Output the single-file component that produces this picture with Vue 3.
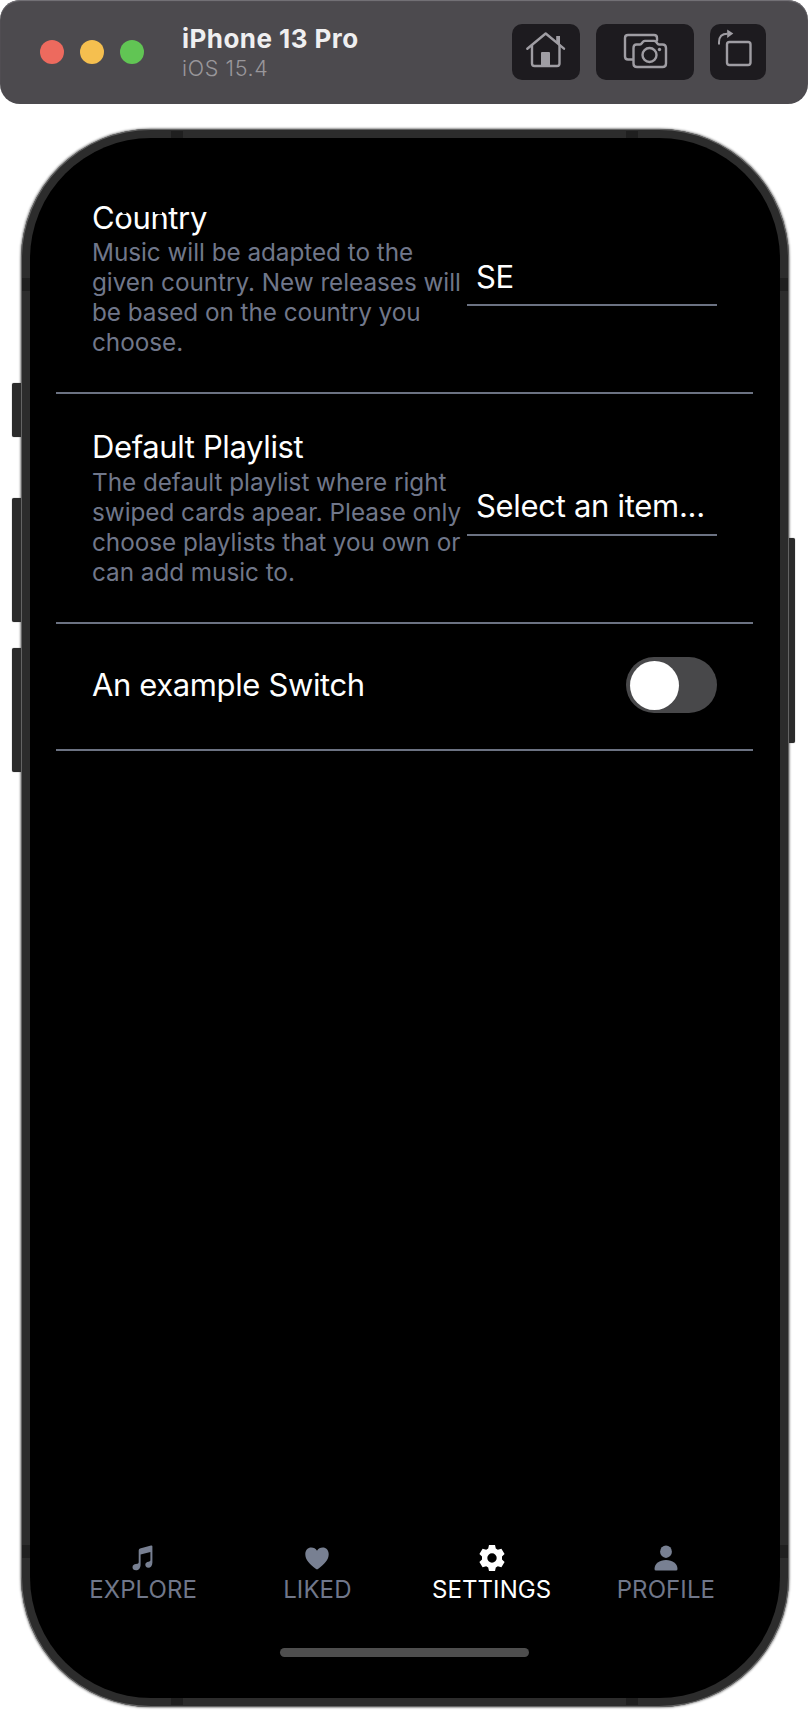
<script setup>
const rows = [
  {
    title: 'Country',
    lines: ['Music will be adapted to the', 'given country. New releases will', 'be based on the country you', 'choose.'],
    value: 'SE',
  },
  {
    title: 'Default Playlist',
    lines: ['The default playlist where right', 'swiped cards apear. Please only', 'choose playlists that you own or', 'can add music to.'],
    value: 'Select an item...',
  },
]
const tabs = [
  { id: 'explore', label: 'EXPLORE' },
  { id: 'liked', label: 'LIKED' },
  { id: 'settings', label: 'SETTINGS' },
  { id: 'profile', label: 'PROFILE' },
]
const bands = ['top a', 'top b', 'bottom a', 'bottom b', 'left c', 'left d', 'right c', 'right d']
</script>

<template>
  <div class="page">
    <header class="toolbar">
      <div class="lights"><i class="red"></i><i class="amber"></i><i class="green"></i></div>
      <div class="device">
        <div class="name">iPhone 13 Pro</div>
        <div class="os">iOS 15.4</div>
      </div>
      <div class="buttons">
        <button class="home">
          <svg width="68" height="56" fill="none" stroke="#9f9da3" stroke-width="2.4" stroke-linejoin="round" stroke-linecap="round">
            <path d="M15.300 24.700 33.700 9.500 52 24.700" />
            <path d="M20 21.500V39.500Q20 42 22.500 42H45Q47.500 42 47.500 39.500V21.500" />
            <path d="M44.200 12H48V21L44.200 17.500Z" fill="#9f9da3" stroke="none" />
            <path d="M29 42V29Q29 28 30 28H37Q38 28 38 29V42Z" fill="#9f9da3" stroke="none" />
          </svg>
        </button>
        <button class="shot">
          <svg width="98" height="56" fill="none" stroke="#9f9da3" stroke-width="2.4" stroke-linejoin="round" stroke-linecap="round">
            <path d="M36.500 35.500H32Q29 35.500 29 32.500V14Q29 11 32 11H58Q61 11 61 14V16.500" />
            <path d="M40.500 20.500H44Q45 20.500 46 19L47 17.700Q47.700 16.900 49 16.900H58Q59.300 16.900 60 17.700L61 19Q62 20.500 63 20.500H66.500Q70 20.500 70 24V39.500Q70 43 66.500 43H41Q37.500 43 37.500 39.500V24Q37.500 20.500 40.500 20.500Z" />
            <circle cx="53.500" cy="31" r="7" />
            <circle cx="63.500" cy="25.500" r="1.700" fill="#9f9da3" stroke="none" />
          </svg>
        </button>
        <button class="rotate">
          <svg width="56" height="56" fill="none" stroke="#9f9da3" stroke-width="2.4" stroke-linejoin="round">
            <rect x="17" y="18" width="23.500" height="23" rx="2.500" />
            <path d="M9 20.500V18Q9 9.700 17.500 9.700" stroke-width="2" />
            <path d="M17.200 5.500 23.300 9.500 17.200 14Z" fill="#9f9da3" stroke="none" />
          </svg>
        </button>
      </div>
    </header>

    <main class="phone">
      <i class="key mute"></i><i class="key up"></i><i class="key down"></i><i class="key power"></i>
      <i v-for="b in bands" :key="b" :class="['band', b]"></i>
      <div class="screen">
        <section v-for="row in rows" :key="row.title" class="row">
          <div class="copy">
            <h2>{{ row.title }}</h2>
            <p><span v-for="line in row.lines" :key="line">{{ line }}</span></p>
          </div>
          <div class="field">{{ row.value }}</div>
        </section>
        <section class="row slim">
          <h2 class="switch-label">An example Switch</h2>
          <div class="switch"><i></i></div>
        </section>
        <nav class="tabs">
          <div v-for="tab in tabs" :key="tab.id" :class="['tab', tab.id]">
            <svg v-if="tab.id === 'explore'" width="28" height="28" viewBox="0 0 28 28" fill="currentColor">
              <path d="M9.700 6.500Q9.700 5 11 4.500L22 1.600Q23.400 1.300 23.400 2.600V18.500C23.400 22 21.500 23.700 19.400 23.700C17.300 23.700 16.300 22.300 16.300 20.800C16.300 18.800 17.800 18 19.500 17.700C20.900 17.400 21.400 17 21.400 16V7.900L11.600 10.400V20.500C11.600 24.500 9.500 26.300 7 26.300C4.800 26.300 3.500 25 3.500 23.200C3.500 21.200 5 20.500 7 20.100C9.200 19.700 9.700 19.300 9.700 18Z" />
            </svg>
            <svg v-else-if="tab.id === 'liked'" width="28" height="28" viewBox="0 0 28 28" fill="currentColor">
              <path d="M14 25.200Q13.300 25.200 12.700 24.700C6.500 20 2.300 15.600 2.300 10.200C2.300 6.300 5 3.600 8.200 3.600C10.800 3.600 12.700 4.800 14 6.700C15.300 4.800 17.200 3.600 19.800 3.600C23 3.600 25.700 6.300 25.700 10.200C25.700 15.600 21.500 20 15.300 24.700Q14.700 25.200 14 25.200Z" />
            </svg>
            <svg v-else-if="tab.id === 'settings'" width="28" height="28" viewBox="0 0 28 28" fill="currentColor">
              <path fill-rule="evenodd" d="M11 1H17L17.800 4.600L19.800 5.800L23.400 4.700L26.600 10L24 12.600V15.400L26.600 18L23.400 23.300L19.800 22.200L17.800 23.400L17 27H11L10.200 23.400L8.200 22.200L4.600 23.300L1.400 18L4 15.400V12.600L1.400 10L4.600 4.700L8.200 5.800L10.200 4.600ZM14 9.300A4.700 4.700 0 1 0 14 18.700A4.700 4.700 0 1 0 14 9.300Z" />
            </svg>
            <svg v-else width="28" height="28" viewBox="0 0 28 28" fill="currentColor">
              <ellipse cx="14" cy="7.700" rx="5.900" ry="6.200" />
              <path d="M2.500 25C2.500 19.500 7.500 16 14 16S25.500 19.500 25.500 25Q25.500 26.500 24 26.500H4Q2.500 26.500 2.500 25Z" />
            </svg>
            <span>{{ tab.label }}</span>
          </div>
        </nav>
        <div class="indicator"></div>
      </div>
      <!-- black status bar remnants over the first heading -->
      <svg class="status" width="70" height="24" viewBox="0 0 70 24">
        <path d="M15 8H21.500V20H18L15 16Z" />
        <path d="M28 8H45V17H38L36 19L28 17Z" />
        <path d="M49.500 8H57V20H50Z" />
        <path d="M57 8H65L61 15H57Z" />
      </svg>
    </main>
  </div>
</template>

<style>
body { background: #fff; }
</style>

<style scoped>
.page { width: 808px; height: 1712px; overflow: hidden; font-family: Inter, "Liberation Sans", sans-serif; box-sizing: border-box; }
.page * { box-sizing: border-box; }
.toolbar { height: 104px; border-radius: 20px; background: #4c4a4e; box-shadow: inset 0 1px 1px #77757a; display: flex; align-items: center; padding: 0 42px 0 40px; }
.lights { display: flex; gap: 16px; }
.lights i { width: 24px; height: 24px; border-radius: 50%; }
.red { background: #ed6a5e; }
.amber { background: #f5bf4f; }
.green { background: #61c554; }
.device { margin-left: 38px; width: 330px; height: 56px; white-space: nowrap; }
.name { font-weight: 700; font-size: 26px; line-height: 30px; letter-spacing: 0.45px; color: #efeff0; }
.os { font-weight: 300; font-size: 21.500px; line-height: 26px; margin-top: 1px; letter-spacing: 0.65px; color: #99979b; }
.buttons { display: flex; gap: 16px; margin-left: auto; }
button { display: block; border: 0; padding: 0; height: 56px; background: #1d1b1f; border-radius: 10px; }
button svg { display: block; }
.home { width: 68px; }
.shot { width: 98px; }
.rotate { width: 56px; }

.phone { position: relative; margin: 25px 0 0 21px; width: 768px; height: 1578px; padding: 9px 9px 9px; border-radius: 130px; background: #2c2c2c; box-shadow: inset 0 0 0 1px #666, 0 0 2px 0.5px #999; }
.screen { height: 100%; background: #000; border-radius: 121px; padding: 26px 27px 0 26px; display: flex; flex-direction: column; color: #fff; }
.key { position: absolute; background: #2b2b2b; left: -9px; width: 9px; border-radius: 2px 0 0 2px; box-shadow: 0 0 1px #555; }
.mute { top: 254px; height: 54px; }
.up { top: 369px; height: 124px; }
.down { top: 519px; height: 124px; }
.power { left: 768px; width: 6px; top: 409px; height: 205px; border-radius: 0 2px 2px 0; }
.band { position: absolute; background: #1f1f1f; }
.top, .bottom { width: 12px; height: 7px; }
.top { top: 2px; }
.bottom { bottom: 2px; }
.a { left: 150px; }
.b { left: 605px; }
.left, .right { width: 8px; height: 13px; }
.left { left: 1px; }
.right { right: 1px; }
.c { top: 149px; }
.d { top: 1416px; }
.status { position: absolute; left: 84px; top: 65px; fill: #000; }

.row { height: 230px; flex: none; border-bottom: 2px solid #6b7282; padding: 36px 36px 0 36px; display: flex; justify-content: space-between; }
.row:first-child { padding-top: 37px; }
.row:first-child .field { margin-top: 49px; }
.copy { width: 371px; white-space: nowrap; }
h2 { margin: 0; font-weight: 400; font-size: 31px; line-height: 34px; letter-spacing: -0.38px; }
p { margin: 2px 0 0; font-size: 24.300px; line-height: 30px; letter-spacing: -0.04px; color: #70778a; }
.row:nth-child(2) p { margin-top: 3px; }
p span { display: block; }
.field { width: 250px; height: 56px; margin-top: 50px; border-bottom: 2px solid #6b7282; padding: 9px 9px 0; font-size: 31px; line-height: 34px; letter-spacing: -0.3px; white-space: nowrap; }
.row:first-child .field { padding-top: 10px; }
.row.slim { height: 127px; padding-top: 0; padding-bottom: 3px; align-items: center; }
.switch { width: 91px; height: 56px; border-radius: 28px; background: #48484a; padding: 3.500px; }
.switch i { display: block; width: 49px; height: 49px; border-radius: 50%; background: #fff; }
.tabs { margin-top: auto; height: 64px; display: flex; }
.tab { flex: 1; display: flex; flex-direction: column; align-items: center; color: #788092; }
.tab svg { display: block; }
.tab span { font-size: 24px; line-height: 30px; margin-top: 3px; letter-spacing: 0.1px; color: #70778a; }
.settings, .tab.settings span { color: #fff; }
.indicator { align-self: center; width: 249px; height: 9px; border-radius: 5px; background: #4e4e4e; margin: 40px 0 41px; flex: none; }
</style>
